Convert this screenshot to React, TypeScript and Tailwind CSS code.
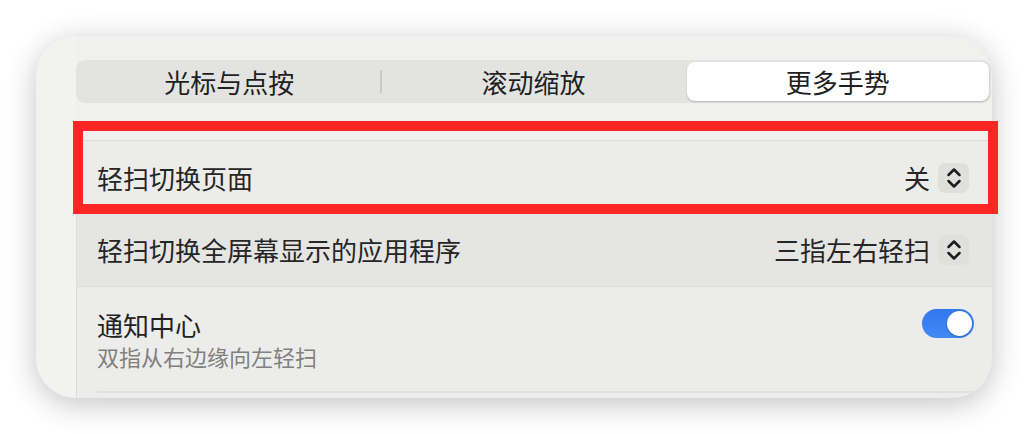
import React from 'react';

const font = { fontFamily: '"Noto Sans CJK SC", "Noto Sans", sans-serif' };

const Stepper = () => (
  <div className="flex h-[30px] w-[31px] items-center justify-center rounded-[7px] bg-[#dfdfde]">
    <svg width="16" height="24" viewBox="0 0 16 24" fill="none" stroke="#1c1c1c" strokeWidth="2.5" strokeLinecap="round" strokeLinejoin="round">
      <path d="M2.5 9 L8 3.5 L13.5 9" />
      <path d="M2.5 15 L8 20.5 L13.5 15" />
    </svg>
  </div>
);

const Toggle = () => (
  <div className="flex h-[29px] w-[52px] items-center justify-end rounded-full bg-gradient-to-b from-[#3378ee] to-[#4289f5] px-[2px]">
    <div className="h-[25px] w-[25px] rounded-full bg-white shadow-[0_1px_2px_rgba(0,0,0,0.25)]" />
  </div>
);

const tabs = ['光标与点按', '滚动缩放', '更多手势'];

export default function App() {
  const selected = 2;

  return (
    <div className="relative h-[434px] w-[1028px] bg-white pl-9 pt-9" style={font}>
      <div className="flex h-[362px] w-[956px] overflow-hidden rounded-[40px] bg-[#f0f0ef] shadow-[0_6px_30px_rgba(0,0,0,0.24)]">
        <div className="w-10 shrink-0 bg-[#f2f2f1]" />
        <div className="flex flex-1 flex-col pt-6">
          {/* segmented control */}
          <div className="flex h-[43px] w-[915px] items-center rounded-[9px] bg-[#e3e3e2] p-[2px]">
            {tabs.map((t, i) => (
              <React.Fragment key={t}>
                {i > 0 && (
                  <div className={`h-[23px] w-[2px] rounded-full ${i === 1 ? 'bg-[#c9c9c8]' : 'bg-transparent'}`} />
                )}
                <div
                  className={`flex h-full flex-1 items-center justify-center rounded-[8px] text-[26px] leading-none text-[#1f1f1f] ${
                    i === selected ? 'bg-white shadow-[0_1px_2px_rgba(0,0,0,0.2)]' : ''
                  }`}
                >
                  {t}
                </div>
              </React.Fragment>
            ))}
          </div>

          {/* list */}
          <div className="mt-[37px] flex flex-1 flex-col border-l border-t border-[#dcdcdb] text-[#262626]">
            <div className="flex h-[73px] shrink-0 items-center justify-between bg-[#ececeb] pl-5 pr-[23px]">
              <span className="text-[26px] leading-8">轻扫切换页面</span>
              <div className="flex items-center gap-2">
                <span className="text-[26px] leading-8">关</span>
                <Stepper />
              </div>
            </div>
            <div className="flex h-[73px] shrink-0 items-center justify-between border-b border-[#dcdcdb] bg-[#e5e5e4] pl-5 pr-[23px]">
              <span className="text-[26px] leading-8">轻扫切换全屏幕显示的应用程序</span>
              <div className="flex items-center gap-2">
                <span className="text-[26px] leading-8">三指左右轻扫</span>
                <Stepper />
              </div>
            </div>
            <div className="flex flex-1 flex-col bg-[#ececeb] pl-5">
              <div className="flex items-start justify-between pr-[18px] pt-[22px]">
                <div className="flex flex-col">
                  <span className="text-[26px] leading-8 text-[#222]">通知中心</span>
                  <span className="mt-px text-[22px] leading-7 text-[#808080]">双指从右边缘向左轻扫</span>
                </div>
                <Toggle />
              </div>
              <div className="mr-[19px] mt-[21px] border-t-2 border-[#e0e0df]" />
            </div>
          </div>
        </div>
      </div>

      {/* annotation box */}
      <div className="absolute left-[73px] top-[121px] h-[93px] w-[925px] border-[10px] border-[#fe2525]" />
    </div>
  );
}
